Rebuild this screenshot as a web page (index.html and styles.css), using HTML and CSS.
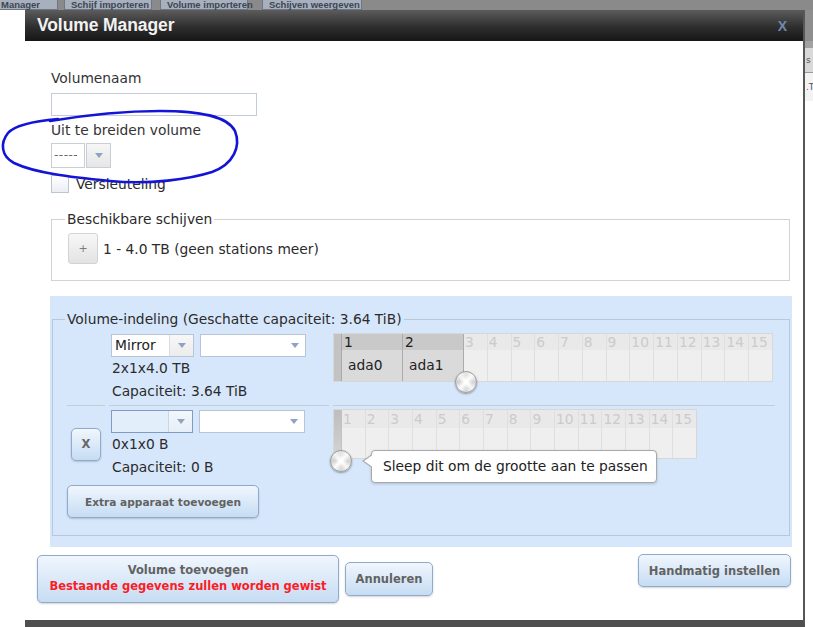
FILE: index.html
```html
<!DOCTYPE html>
<html>
<head>
<meta charset="utf-8">
<link rel="stylesheet" href="styles.css">
</head>
<body>
<div class="page">
  <div class="tabs">
    <div class="tab tab1">Manager</div>
    <div class="tab tab2">Schijf importeren</div>
    <div class="tab tab3">Volume importeren</div>
    <div class="tab tab4">Schijven weergeven</div>
  </div>
  <div class="behind">
    <div class="side">
      <div class="side-top"></div>
      <div class="side-gap"></div>
      <div class="side-head">s</div>
      <div class="side-row">.T</div>
    </div>
  </div>
</div>

<div class="dialog">
  <div class="titlebar">
    <span class="title">Volume Manager</span>
    <span class="close">X</span>
  </div>
  <div class="dlg-body">
    <div class="form">
      <div class="lbl">Volumenaam</div>
      <div class="textbox"></div>
      <div class="lbl lbl2">Uit te breiden volume</div>
      <div class="ext-select">
        <span class="ext-val">-----</span>
        <span class="ext-btn"><span class="tri"></span></span>
      </div>
      <div class="check-row">
        <span class="checkbox"></span>
        <span class="check-lbl">Versleuteling</span>
      </div>
      <fieldset class="fs avail">
        <legend>Beschikbare schijven</legend>
        <div class="avail-row">
          <span class="plus">+</span>
          <span>1 - 4.0 TB (geen stations meer)</span>
        </div>
      </fieldset>
    </div>

    <div class="layout-area">
      <fieldset class="fs layout">
        <legend>Volume-indeling (Geschatte capaciteit: 3.64 TiB)</legend>
        <div class="vgrid">
          <div class="cell ca r1"></div>
          <div class="cell cb r1">
            <div class="sels">
              <div class="sel s1"><span class="sel-val">Mirror</span><span class="sel-btn"><span class="tri"></span></span></div>
              <div class="sel s2"><span class="sel-val"></span><span class="sel-btn"><span class="tri"></span></span></div>
            </div>
            <div class="info">2x1x4.0 TB</div>
            <div class="info">Capaciteit: 3.64 TiB</div>
          </div>
          <div class="cell cc r1">
            <div class="disks d1">
              <div class="handle"></div>
              <div class="dcol used"><div class="dh">1</div><div class="db">ada0</div></div>
              <div class="dcol used"><div class="dh">2</div><div class="db">ada1</div></div>
              <div class="dcol"><div class="dh">3</div><div class="db"></div></div>
              <div class="dcol"><div class="dh">4</div><div class="db"></div></div>
              <div class="dcol"><div class="dh">5</div><div class="db"></div></div>
              <div class="dcol"><div class="dh">6</div><div class="db"></div></div>
              <div class="dcol"><div class="dh">7</div><div class="db"></div></div>
              <div class="dcol"><div class="dh">8</div><div class="db"></div></div>
              <div class="dcol"><div class="dh">9</div><div class="db"></div></div>
              <div class="dcol"><div class="dh">10</div><div class="db"></div></div>
              <div class="dcol"><div class="dh">11</div><div class="db"></div></div>
              <div class="dcol"><div class="dh">12</div><div class="db"></div></div>
              <div class="dcol"><div class="dh">13</div><div class="db"></div></div>
              <div class="dcol"><div class="dh">14</div><div class="db"></div></div>
              <div class="dcol last"><div class="dh">15</div><div class="db"></div></div>
              <div class="knob k1"></div>
            </div>
          </div>

          <div class="cell ca r2"><button class="btn xbtn">X</button></div>
          <div class="cell cb r2">
            <div class="sels">
              <div class="sel s1 focus"><span class="sel-val"></span><span class="sel-btn"><span class="tri"></span></span></div>
              <div class="sel s2"><span class="sel-val"></span><span class="sel-btn"><span class="tri"></span></span></div>
            </div>
            <div class="info">0x1x0 B</div>
            <div class="info">Capaciteit: 0 B</div>
          </div>
          <div class="cell cc r2">
            <div class="disks d2">
              <div class="handle"></div>
              <div class="dcol"><div class="dh">1</div><div class="db"></div></div>
              <div class="dcol"><div class="dh">2</div><div class="db"></div></div>
              <div class="dcol"><div class="dh">3</div><div class="db"></div></div>
              <div class="dcol"><div class="dh">4</div><div class="db"></div></div>
              <div class="dcol"><div class="dh">5</div><div class="db"></div></div>
              <div class="dcol"><div class="dh">6</div><div class="db"></div></div>
              <div class="dcol"><div class="dh">7</div><div class="db"></div></div>
              <div class="dcol"><div class="dh">8</div><div class="db"></div></div>
              <div class="dcol"><div class="dh">9</div><div class="db"></div></div>
              <div class="dcol"><div class="dh">10</div><div class="db"></div></div>
              <div class="dcol"><div class="dh">11</div><div class="db"></div></div>
              <div class="dcol"><div class="dh">12</div><div class="db"></div></div>
              <div class="dcol"><div class="dh">13</div><div class="db"></div></div>
              <div class="dcol"><div class="dh">14</div><div class="db"></div></div>
              <div class="dcol last"><div class="dh">15</div><div class="db"></div></div>
              <div class="knob k2"></div>
              <div class="tip">Sleep dit om de grootte aan te passen</div>
            </div>
          </div>

          <div class="extra-row"><button class="btn extra">Extra apparaat toevoegen</button></div>
        </div>
      </fieldset>
    </div>

    <div class="actions">
      <button class="btn big add">
        <span class="add-l1">Volume toevoegen</span>
        <span class="add-l2">Bestaande gegevens zullen worden gewist</span>
      </button>
      <button class="btn big cancel">Annuleren</button>
      <button class="btn big manual">Handmatig instellen</button>
    </div>
  </div>
</div>

<svg class="annot" width="813" height="627" viewBox="0 0 813 627">
  <path d="M 58 119 C 35 121, 15 125, 8 133 C 0 143, 1 156, 14 163 C 35 173, 70 177, 110 181 C 150 185, 190 179, 212 172 C 234 164, 241 146, 235 131 C 227 116, 200 111, 160 111 C 120 111, 80 116, 50 121" fill="none" stroke="#1414d6" stroke-width="2.6" stroke-linecap="round"/>
</svg>
</body>
</html>
```

FILE: styles.css
```css
* { box-sizing: border-box; }
html, body { margin: 0; padding: 0; }
body {
  width: 813px;
  height: 627px;
  overflow: hidden;
  position: relative;
  background: #fff;
  font-family: "DejaVu Sans", Verdana, sans-serif;
  font-size: 13.8px;
  color: #2b2b2b;
}

/* page behind the dialog */
.page { display: flex; flex-direction: column; height: 627px; }
.tabs { height: 10px; background: #8a8a8a; overflow: hidden; flex: none; display: flex; align-items: flex-start; }
.tab {
  height: 10px;
  line-height: 9px;
  background: #a7b0bc;
  border: 1px solid #6f7782;
  border-top: none;
  color: #3c4654;
  font-family: "Liberation Sans", Arial, sans-serif;
  font-weight: bold;
  font-size: 9.5px;
  padding-left: 6px;
  white-space: nowrap;
}
.tab1 { width: 59px; margin-left: -1px; padding-left: 1px; }
.tab2 { width: 88px; margin-left: 6px; }
.tab3 { width: 88px; margin-left: 8px; }
.tab4 { width: 100px; margin-left: 14px; }

.behind { flex: 1; display: flex; justify-content: flex-end; }
.side { width: 8px; display: flex; flex-direction: column; font-size: 9px; color: #555; }
.side-top { height: 31px; background: #8e8e8e; }
.side-gap { height: 7px; background: #a2a2a2; }
.side-head { height: 25px; background: #d9d9d9; border-bottom: 1px solid #9a9a9a; line-height: 24px; padding-left: 1px; }
.side-row { height: 28px; background: #f3f3f3; line-height: 28px; padding-left: 1px; }

/* dialog */
.dialog {
  position: absolute;
  left: 25px;
  top: 10px;
  width: 780px;
  height: 617px;
  background: #fff;
  border-right: 2px solid #575757;
  border-bottom: 7px solid #4f4f4f;
  display: flex;
  flex-direction: column;
}
.titlebar {
  height: 31px;
  flex: none;
  background: linear-gradient(#5c5c5c, #2e2e2e 55%, #161616);
  display: flex;
  align-items: center;
  justify-content: space-between;
  padding: 0 16px 0 12px;
}
.title {
  font-family: "Liberation Sans", Arial, sans-serif;
  font-weight: bold;
  font-size: 17.5px;
  color: #f2f2f2;
  letter-spacing: -0.1px;
}
.close {
  font-family: "Liberation Sans", Arial, sans-serif;
  font-weight: bold;
  font-size: 14px;
  color: #6f89aa;
}
.dlg-body { flex: 1; display: flex; flex-direction: column; }

.form { padding: 29px 13px 0 26px; }
.lbl { line-height: 16px; color: #333; }
.textbox {
  margin-top: 7px;
  width: 206px;
  height: 23px;
  border: 1px solid #c4ccd8;
  background: #fff;
}
.lbl2 { margin-top: 6px; }
.ext-select { margin-top: 5px; display: flex; height: 25px; }
.ext-val {
  width: 34px;
  border: 1px solid #c8ced8;
  line-height: 22px;
  padding-left: 2px;
  color: #666;
  font-size: 12px;
  letter-spacing: 0.5px;
}
.ext-btn {
  width: 25px;
  margin-left: 1px;
  border: 1px solid #c8ced8;
  background: linear-gradient(#f6f6f6, #e6e6e6);
  display: flex;
  align-items: center;
  justify-content: center;
}
.tri {
  width: 0;
  height: 0;
  border-left: 4px solid transparent;
  border-right: 4px solid transparent;
  border-top: 5px solid #8fa3c2;
}
.check-row { margin-top: 7px; display: flex; align-items: center; height: 18px; }
.checkbox {
  width: 18px;
  height: 18px;
  border: 1px solid #bcc6d3;
  background: linear-gradient(#fff, #e9eef5);
}
.check-lbl { margin-left: 7px; line-height: 16px; }

.fs { margin: 0; min-width: 0; }
.fs legend { padding: 0 2px; margin-left: -2px; line-height: 16px; }
.avail {
  margin-top: 18px;
  border: 1px solid #d3d3d3;
  padding: 0 0 16px 15px;
}
.avail-row { margin-top: 6px; display: flex; align-items: center; gap: 5px; }
.plus {
  margin-left: 1px;
  width: 30px;
  height: 31px;
  border: 1px solid #d3d3d3;
  border-radius: 3px;
  background: linear-gradient(#f7f7f7, #e3e3e3);
  color: #7a7a7a;
  font-size: 11px;
  display: flex;
  align-items: center;
  justify-content: center;
}

/* volume layout */
.layout-area {
  margin: 15px 11px 0 25px;
  background: #d6e7fb;
  padding: 15px 2px 11px 2px;
}
.layout {
  border: 1px solid #bac8d6;
  padding: 0 14px 17px 14px;
}
.vgrid {
  display: grid;
  grid-template-columns: 38px 220px 442px;
  column-gap: 4px;
}
.r1 { border-bottom: 1px solid #c2cedb; }
.cb.r1 { padding: 7px 0 2px 2px; }
.cc.r1 { padding-top: 6px; }
.cb.r2 { padding: 4px 0 0 2px; }
.cc.r2 { padding-top: 3px; }
.ca.r2 { display: flex; align-items: center; padding: 3px 0 0 4px; }

.sels { display: flex; gap: 6px; }
.sel {
  display: flex;
  height: 23px;
  border: 1px solid #b9c5d4;
  background: #fff;
}
.sel.s1 { width: 83px; }
.sel.s2 { width: 106px; }
.sel-val { flex: 1; line-height: 21px; padding-left: 3px; color: #222; }
.sel-btn {
  width: 24px;
  border-left: 1px solid #d6dde6;
  background: linear-gradient(#f7f7f7, #ececec);
  display: flex;
  align-items: center;
  justify-content: center;
}
.sel.s2 .sel-btn { width: 22px; border-left-color: #fff; background: #fff; }
.sel.focus { border-color: #7f9bc3; width: 82px; }
.sel.focus .sel-val { background: #e3eefb; }
.sel.focus .sel-btn { background: linear-gradient(#f3f7fc, #e6eef8); border-left-color: #c9d6e6; }
.info { line-height: 23px; padding-left: 1px; }

/* disk grids */
.disks {
  position: relative;
  display: flex;
  border: 1px solid #d7d7d7;
  background: #efefef;
}
.d1 { width: 440px; height: 49px; }
.d2 { width: 364px; height: 50px; }
.handle { width: 8px; background: #c3c3c3; border-right: 1px solid #a9a9a9; }
.d2 .handle { background: linear-gradient(#bdbdbd, #cdcdcd 70%, #d9d9d9); border-right-color: #c2c2c2; }
.dcol {
  flex: 1;
  display: flex;
  flex-direction: column;
  border-right: 1px solid #dfdfdf;
}
.dcol.last { border-right: none; }
.dh {
  background: #e9e9e9;
  color: #cbcbcb;
  line-height: 16px;
  height: 16px;
  padding-left: 1px;
  white-space: nowrap;
  overflow: hidden;
}
.d2 .dh { height: 18px; line-height: 18px; }
.db { flex: 1; }
.dcol.used { flex: none; width: 61px; border-right-color: #ababab; }
.dcol.used .dh { background: #c9c9c9; color: #1e1e1e; padding-left: 2px; }
.dcol.used .db { background: #dadada; display: flex; align-items: center; padding-left: 6px; padding-bottom: 1px; color: #222; }

.knob {
  position: absolute;
  width: 22px;
  height: 22px;
  border-radius: 50%;
  border: 1px solid #9c9c9c;
  background:
    radial-gradient(circle, rgba(255,255,255,0.95) 0 12%, rgba(255,255,255,0) 45%),
    conic-gradient(#e2e2e2, #fbfbfb, #d2d2d2, #f7f7f7, #d8d8d8, #fdfdfd, #d0d0d0, #f4f4f4, #e2e2e2);
  box-shadow: 0 1px 2px rgba(0,0,0,0.35);
}
.k1 { left: 121px; top: 37px; }
.k2 { left: -4px; top: 40px; }

.tip {
  position: absolute;
  left: 37px;
  top: 40px;
  width: 286px;
  height: 33px;
  background: #fff;
  border: 1px solid #a8a8a8;
  border-radius: 4px;
  box-shadow: 0 1px 3px rgba(0,0,0,0.18);
  padding-left: 11px;
  line-height: 31px;
  white-space: nowrap;
  color: #222;
}
.tip::before, .tip::after {
  content: "";
  position: absolute;
  width: 0;
  height: 0;
  border-top: 7px solid transparent;
  border-bottom: 7px solid transparent;
}
.tip::before { left: -10px; top: 3px; border-right: 10px solid #a8a8a8; }
.tip::after { left: -8px; top: 3px; border-right: 10px solid #fff; }

/* buttons */
.btn {
  font-family: "DejaVu Sans", Verdana, sans-serif;
  font-weight: bold;
  font-size: 10.6px;
  color: #626262;
  background: linear-gradient(#f0f6fd, #d9e8f8 55%, #c6dcf3);
  border: 1px solid #8faacb;
  border-radius: 5px;
  box-shadow: 0 1px 2px rgba(0,0,0,0.18);
  padding: 0;
  margin: 0;
}
.btn.big { font-size: 11.5px; }
.xbtn { width: 30px; height: 33px; font-size: 11.5px; color: #666; }
.extra-row { grid-column: 1 / 4; padding-top: 6px; }
.extra { width: 192px; height: 33px; }

.actions {
  margin-top: 7px;
  padding: 0 12px;
  display: flex;
  align-items: flex-start;
}
.add {
  margin-top: 1px;
  width: 302px;
  height: 48px;
  display: flex;
  flex-direction: column;
  align-items: center;
  justify-content: center;
  padding-bottom: 2px;
}
.add-l1 { line-height: 16px; color: #626262; }
.add-l2 { line-height: 16px; color: #fb1c25; }
.cancel { margin-left: 6px; margin-top: 8px; width: 88px; height: 34px; }
.manual { margin-left: auto; width: 153px; height: 33px; }

.annot { position: absolute; left: 0; top: 0; pointer-events: none; }
```
